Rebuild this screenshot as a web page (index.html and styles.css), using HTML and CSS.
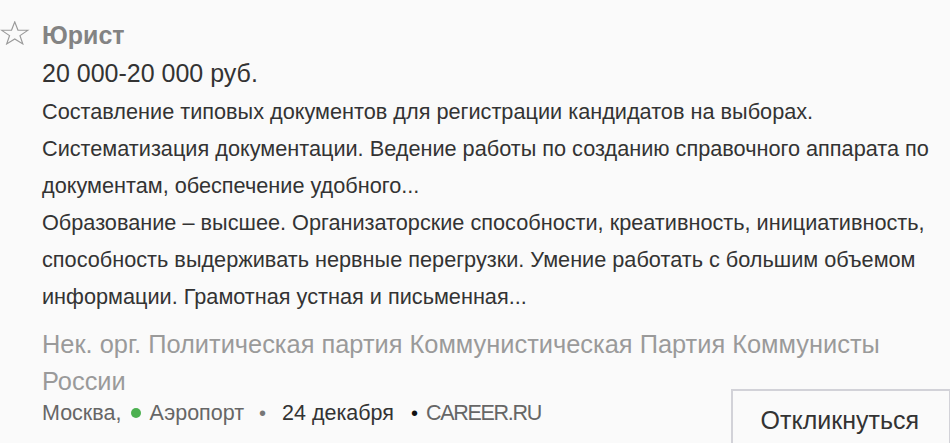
FILE: index.html
```html
<!DOCTYPE html>
<html lang="ru">
<head>
<meta charset="utf-8">
<link rel="stylesheet" href="styles.css">
</head>
<body>
<div class="vacancy">
  <div class="star">
    <svg width="29.5" height="24.3" viewBox="0 0 28 26" preserveAspectRatio="none" aria-hidden="true">
      <polygon points="14,1 17.06,9.79 26.36,9.98 18.95,15.61 21.64,24.52 14,19.2 6.36,24.52 9.05,15.61 1.64,9.98 10.94,9.79" fill="none" stroke="#9a9a9a" stroke-width="1.15" stroke-linejoin="miter"/>
    </svg>
  </div>
  <div class="content">
    <div class="title">Юрист</div>
    <div class="salary">20 000-20 000 руб.</div>
    <div class="desc">
      <p>Составление типовых документов для регистрации кандидатов на выборах. Систематизация документации. Ведение работы по созданию справочного аппарата по документам, обеспечение удобного...</p>
      <p>Образование – высшее. Организаторские способности, креативность, инициативность, способность выдерживать нервные перегрузки. Умение работать с большим объемом информации. Грамотная устная и письменная...</p>
    </div>
    <div class="company">Нек. орг. Политическая партия Коммунистическая Партия Коммунисты России</div>
    <div class="footer">
      <div class="meta">
        <span class="city">Москва,</span>
        <span class="dot"></span>
        <span class="metro">Аэропорт</span>
        <span class="sep gray">•</span>
        <span class="date">24 декабря</span>
        <span class="sep dark">•</span>
        <span class="source">CAREER.RU</span>
      </div>
      <button class="respond">Откликнуться</button>
    </div>
  </div>
</div>
</body>
</html>
```
FILE: styles.css
```css
html, body {
  margin: 0;
  padding: 0;
  background: #fafafa;
  overflow: hidden;
}
body {
  font-family: "Liberation Sans", Arial, sans-serif;
  color: #333;
  width: 950px;
  height: 443px;
}
.vacancy {
  display: grid;
  grid-template-columns: 42px 1fr;
  padding-top: 20px;
}
.star {
  padding: 1px 0 0 0;
}
.star svg {
  display: block;
}
.title {
  font-size: 25px;
  font-weight: bold;
  color: #838383;
  line-height: 30px;
}
.salary {
  font-size: 25px;
  line-height: 34px;
  margin-top: 6px;
  color: #333;
}
.desc {
  margin-top: 3px;
}
.desc p {
  margin: 0;
  font-size: 21.7px;
  line-height: 37px;
  color: #333;
  max-width: 900px;
}
.company {
  margin-top: 11px;
  font-size: 25.4px;
  line-height: 37px;
  color: #9a9a9a;
  max-width: 900px;
}
.footer {
  display: flex;
  align-items: flex-start;
  justify-content: space-between;
}
.meta {
  font-size: 21.5px;
  line-height: 26px;
  color: #666;
  display: flex;
  align-items: center;
}
.dot {
  width: 10px;
  height: 10px;
  border-radius: 50%;
  background: #4cb050;
  margin-left: 10px;
  margin-right: 8px;
}
.sep {
  font-size: 20px;
}
.sep.gray { color: #777; margin: 0 16px 0 15px; }
.sep.dark { color: #111; margin: 0 8px 0 17px; }
.date { color: #333; }
.source { color: #666; letter-spacing: -1.3px; }
.respond {
  font-family: "Liberation Sans", Arial, sans-serif;
  font-size: 25px;
  line-height: 29px;
  color: #333;
  background: #fafafa;
  border: 2px solid #d2d2d8;
  padding: 15px 30px 20px 28px;
  margin-top: -11px;
  margin-right: -1px;
}
```
